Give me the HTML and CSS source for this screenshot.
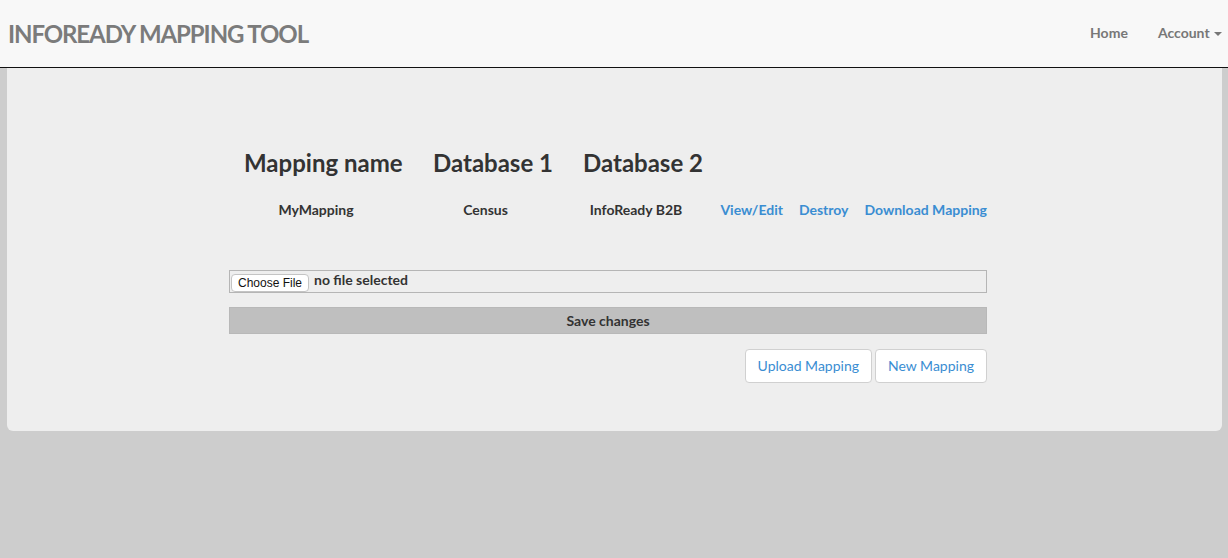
FILE: index.html
```html
<!DOCTYPE html>
<html>
<head>
<meta charset="utf-8">
<title>InfoReady Mapping Tool</title>
<link rel="stylesheet" href="styles.css">
</head>
<body>
<nav class="navbar">
  <div class="brand">INFOREADY MAPPING TOOL</div>
  <ul class="nav">
    <li><a href="#">Home</a></li>
    <li><a href="#">Account <span class="caret"></span></a></li>
  </ul>
</nav>
<div class="jumbotron">
  <div class="content">
    <div class="grid">
      <div class="th">Mapping name</div>
      <div class="th">Database 1</div>
      <div class="th">Database 2</div>
      <div class="th"></div>
      <div class="td">MyMapping</div>
      <div class="td">Census</div>
      <div class="td">InfoReady B2B</div>
      <div class="links">
        <a href="#">View/Edit</a>
        <a href="#">Destroy</a>
        <a href="#">Download Mapping</a>
      </div>
    </div>
    <form class="upload">
      <div class="filebox">
        <span class="filebtn">Choose File</span>
        <span class="filetext">no file selected</span>
      </div>
      <div class="save">Save changes</div>
    </form>
    <div class="actions">
      <a class="btn" href="#">Upload Mapping</a>
      <a class="btn" href="#">New Mapping</a>
    </div>
  </div>
</div>
</body>
</html>
```

FILE: styles.css
```css
* { box-sizing: border-box; }
html, body { margin: 0; padding: 0; }
body {
  background: #cdcdcd;
  font-family: Lato, "Open Sans", sans-serif;
  font-size: 14px;
  color: #333;
  height: 558px;
}
a { text-decoration: none; }

.navbar {
  height: 68px;
  background: #f8f8f8;
  border-bottom: 1px solid #111;
  display: flex;
  align-items: center;
  justify-content: space-between;
}
.brand {
  margin-left: 8px;
  font-size: 24px;
  font-weight: 700;
  color: #7b7b7b;
  letter-spacing: -1.1px;
  margin-top: -1px;
  white-space: nowrap;
}
.nav {
  list-style: none;
  margin: 0;
  padding: 0;
  display: flex;
  margin-right: 6px;
  margin-top: -3px;
}
.nav a {
  display: block;
  padding: 0 15px;
  color: #777;
  font-size: 14px;
  font-weight: 700;
}
.nav li:last-child a { padding-right: 0; }
.caret {
  display: inline-block;
  width: 0;
  height: 0;
  border-top: 4px solid #777;
  border-left: 4px solid transparent;
  border-right: 4px solid transparent;
  vertical-align: middle;
  margin-left: 1px;
}

.jumbotron {
  margin: 0 6px 0 7px;
  background: #eee;
  height: 363px;
  border-radius: 0 0 6px 6px;
  padding-top: 82px;
}
.content {
  margin-left: 222px;
  width: 758px;
}
.grid {
  display: grid;
  grid-template-columns: 189px 150px 151px 1fr;
}
.th {
  padding: 0 15px;
  font-size: 24px;
  line-height: 26px;
  font-weight: 700;
  height: 26px;
  white-space: nowrap;
}
.td {
  text-align: center;
  padding-right: 15px;
  font-weight: 700;
  line-height: 20px;
  margin-top: 24px;
  white-space: nowrap;
}
.links {
  display: flex;
  justify-content: flex-end;
  gap: 16px;
  margin-top: 24px;
  line-height: 20px;
  white-space: nowrap;
}
.links a {
  color: #3a8dd2;
  font-weight: 700;
}

.upload { margin-top: 50px; }
.filebox {
  height: 23px;
  border: 1px solid #b5b5b5;
  display: flex;
  align-items: center;
  padding-left: 1px;
}
.filebtn {
  font-family: "Liberation Sans", Arial, sans-serif;
  font-size: 12px;
  color: #111;
  background: #fff;
  border: 1px solid #c4c4c4;
  border-radius: 4px;
  height: 18px;
  line-height: 16px;
  padding: 0 4px;
  margin-top: 2px;
  width: 78px;
  text-align: center;
  white-space: nowrap;
}
.filetext {
  margin-left: 5px;
  font-weight: 700;
  margin-top: -4px;
}
.save {
  margin-top: 14px;
  height: 27px;
  background: #bfbfbf;
  border: 1px solid #b8b8b8;
  text-align: center;
  font-weight: 700;
  line-height: 25px;
}
.actions {
  margin-top: 15px;
  display: flex;
  justify-content: flex-end;
  gap: 3px;
}
.btn {
  display: block;
  height: 34px;
  line-height: 32px;
  padding: 0 12px;
  background: #fff;
  border: 1px solid #d0d0d0;
  border-radius: 4px;
  color: #3a8dd2;
  font-size: 14px;
}
```
